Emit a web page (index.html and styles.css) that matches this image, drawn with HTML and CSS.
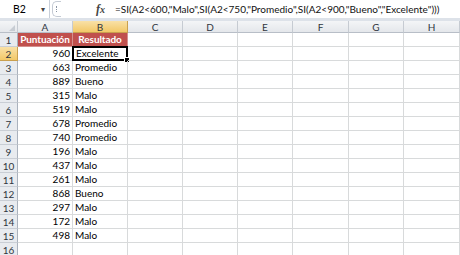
FILE: index.html
```html
<!DOCTYPE html>
<html>
  <head>
    <meta charset="utf-8">
    <title>Hoja de cálculo</title>
    <link rel="stylesheet" href="styles.css">
  </head>
  <body>
    <div class="formula-bar">
      <div class="namebox"><span class="ref">B2</span><span class="arrow">&#9662;</span></div>
      <div class="grip"><span></span></div>
      <div class="fx">f<span>x</span></div>
      <div class="formula">=SI(A2&lt;600,"Malo",SI(A2&lt;750,"Promedio",SI(A2&lt;900,"Bueno","Excelente")))</div>
    </div>

    <div class="sheet">
      <div class="corner"><span></span></div>
      <div class="colhead">A</div>
      <div class="colhead sel">B</div>
      <div class="colhead">C</div>
      <div class="colhead">D</div>
      <div class="colhead">E</div>
      <div class="colhead">F</div>
      <div class="colhead">G</div>
      <div class="colhead">H</div>

      <div class="rowhead">1</div>
      <div class="cell title">Puntuación</div>
      <div class="cell title">Resultado</div>
      <div class="cell"></div><div class="cell"></div><div class="cell"></div><div class="cell"></div><div class="cell"></div><div class="cell"></div>

      <div class="rowhead sel">2</div>
      <div class="cell num">960</div>
      <div class="cell active">Excelente<span class="handle"></span></div>
      <div class="cell"></div><div class="cell"></div><div class="cell"></div><div class="cell"></div><div class="cell"></div><div class="cell"></div>

      <div class="rowhead">3</div>
      <div class="cell num">663</div>
      <div class="cell">Promedio</div>
      <div class="cell"></div><div class="cell"></div><div class="cell"></div><div class="cell"></div><div class="cell"></div><div class="cell"></div>

      <div class="rowhead">4</div>
      <div class="cell num">889</div>
      <div class="cell">Bueno</div>
      <div class="cell"></div><div class="cell"></div><div class="cell"></div><div class="cell"></div><div class="cell"></div><div class="cell"></div>

      <div class="rowhead">5</div>
      <div class="cell num">315</div>
      <div class="cell">Malo</div>
      <div class="cell"></div><div class="cell"></div><div class="cell"></div><div class="cell"></div><div class="cell"></div><div class="cell"></div>

      <div class="rowhead">6</div>
      <div class="cell num">519</div>
      <div class="cell">Malo</div>
      <div class="cell"></div><div class="cell"></div><div class="cell"></div><div class="cell"></div><div class="cell"></div><div class="cell"></div>

      <div class="rowhead">7</div>
      <div class="cell num">678</div>
      <div class="cell">Promedio</div>
      <div class="cell"></div><div class="cell"></div><div class="cell"></div><div class="cell"></div><div class="cell"></div><div class="cell"></div>

      <div class="rowhead">8</div>
      <div class="cell num">740</div>
      <div class="cell">Promedio</div>
      <div class="cell"></div><div class="cell"></div><div class="cell"></div><div class="cell"></div><div class="cell"></div><div class="cell"></div>

      <div class="rowhead">9</div>
      <div class="cell num">196</div>
      <div class="cell">Malo</div>
      <div class="cell"></div><div class="cell"></div><div class="cell"></div><div class="cell"></div><div class="cell"></div><div class="cell"></div>

      <div class="rowhead">10</div>
      <div class="cell num">437</div>
      <div class="cell">Malo</div>
      <div class="cell"></div><div class="cell"></div><div class="cell"></div><div class="cell"></div><div class="cell"></div><div class="cell"></div>

      <div class="rowhead">11</div>
      <div class="cell num">261</div>
      <div class="cell">Malo</div>
      <div class="cell"></div><div class="cell"></div><div class="cell"></div><div class="cell"></div><div class="cell"></div><div class="cell"></div>

      <div class="rowhead">12</div>
      <div class="cell num">868</div>
      <div class="cell">Bueno</div>
      <div class="cell"></div><div class="cell"></div><div class="cell"></div><div class="cell"></div><div class="cell"></div><div class="cell"></div>

      <div class="rowhead">13</div>
      <div class="cell num">297</div>
      <div class="cell">Malo</div>
      <div class="cell"></div><div class="cell"></div><div class="cell"></div><div class="cell"></div><div class="cell"></div><div class="cell"></div>

      <div class="rowhead">14</div>
      <div class="cell num">172</div>
      <div class="cell">Malo</div>
      <div class="cell"></div><div class="cell"></div><div class="cell"></div><div class="cell"></div><div class="cell"></div><div class="cell"></div>

      <div class="rowhead">15</div>
      <div class="cell num">498</div>
      <div class="cell">Malo</div>
      <div class="cell"></div><div class="cell"></div><div class="cell"></div><div class="cell"></div><div class="cell"></div><div class="cell"></div>

      <div class="rowhead">16</div>
      <div class="cell"></div><div class="cell"></div>
      <div class="cell"></div><div class="cell"></div><div class="cell"></div><div class="cell"></div><div class="cell"></div><div class="cell"></div>
    </div>
  </body>
</html>
```

FILE: styles.css
```css
body {
  margin: 0;
  width: 460px;
  height: 255px;
  overflow: hidden;
  background: #ffffff;
  font-family: Lato, "Liberation Sans", sans-serif;
  font-size: 10px;
  color: #000000;
}

/* barra de fórmulas */
.formula-bar {
  display: flex;
  align-items: center;
  height: 18px;
  background: #ffffff;
  border-bottom: 3px solid #dde2e9;
}
.namebox {
  display: flex;
  align-items: center;
  width: 50px;
  height: 18px;
  box-sizing: border-box;
  border-right: 1px solid #c9d0da;
  font-size: 10.5px;
}
.namebox .ref {
  margin-left: 13px;
  width: 24px;
}
.namebox .arrow {
  font-size: 8px;
  color: #444444;
  margin-left: 4px;
}
.grip {
  width: 8px;
  height: 14px;
  margin-left: 2px;
  border: 1px solid #c5cbd4;
  border-radius: 5px 0 0 5px;
  border-right: none;
  display: flex;
  align-items: center;
  justify-content: center;
}
.grip span {
  width: 1px;
  height: 6px;
  border-left: 1px dotted #8b95a3;
}
.fx {
  margin-left: 35px;
  width: 18px;
  font-family: "Liberation Serif", serif;
  font-style: italic;
  font-weight: bold;
  font-size: 12px;
  color: #444444;
}
.fx span {
  font-size: 10px;
}
.formula {
  margin-left: 1px;
  white-space: nowrap;
  font-size: 10px;
  color: #111111;
}

/* hoja */
.sheet {
  display: grid;
  grid-template-columns: 18px 55px 55px 55px 55px 55px 56px 55px 56px;
  grid-template-rows: 12px repeat(16, 14px);
}
.corner,
.colhead,
.rowhead {
  box-sizing: border-box;
  background: linear-gradient(#f4f5f7, #e4e7eb);
  border-right: 1px solid #c6cbd2;
  border-bottom: 1px solid #b8bec7;
  color: #30363e;
  font-size: 10px;
  display: flex;
  align-items: center;
  justify-content: center;
}
.corner span {
  width: 0;
  height: 0;
  margin: 3px 0 0 6px;
  border-left: 6px solid transparent;
  border-bottom: 6px solid #c7ccd3;
}
.rowhead {
  background: #e8ebef;
  border-bottom: 1px solid #c9ced5;
  border-right: 1px solid #aab2bd;
}
.colhead.sel,
.rowhead.sel {
  background: linear-gradient(#f9e1a7, #f2c867);
  border-color: #c9a04f;
}
.cell {
  box-sizing: border-box;
  border-right: 1px solid #d8dadb;
  border-bottom: 1px solid #d8dadb;
  padding: 0 2px;
  line-height: 13px;
  white-space: nowrap;
  position: relative;
}
.cell.num {
  text-align: right;
}
.cell.title {
  background: #c0504d;
  color: #ffffff;
  font-weight: bold;
  text-align: center;
  border-color: #d48f8d;
  padding: 0;
  letter-spacing: -0.1px;
}
.cell.active {
  border: 2px solid #000000;
  margin: -1px 0 0 -1px;
  padding: 0 1px 0 2px;
  line-height: 11px;
}
.handle {
  position: absolute;
  right: -4px;
  bottom: -4px;
  width: 4px;
  height: 4px;
  background: #000000;
  border: 1px solid #ffffff;
}
```
